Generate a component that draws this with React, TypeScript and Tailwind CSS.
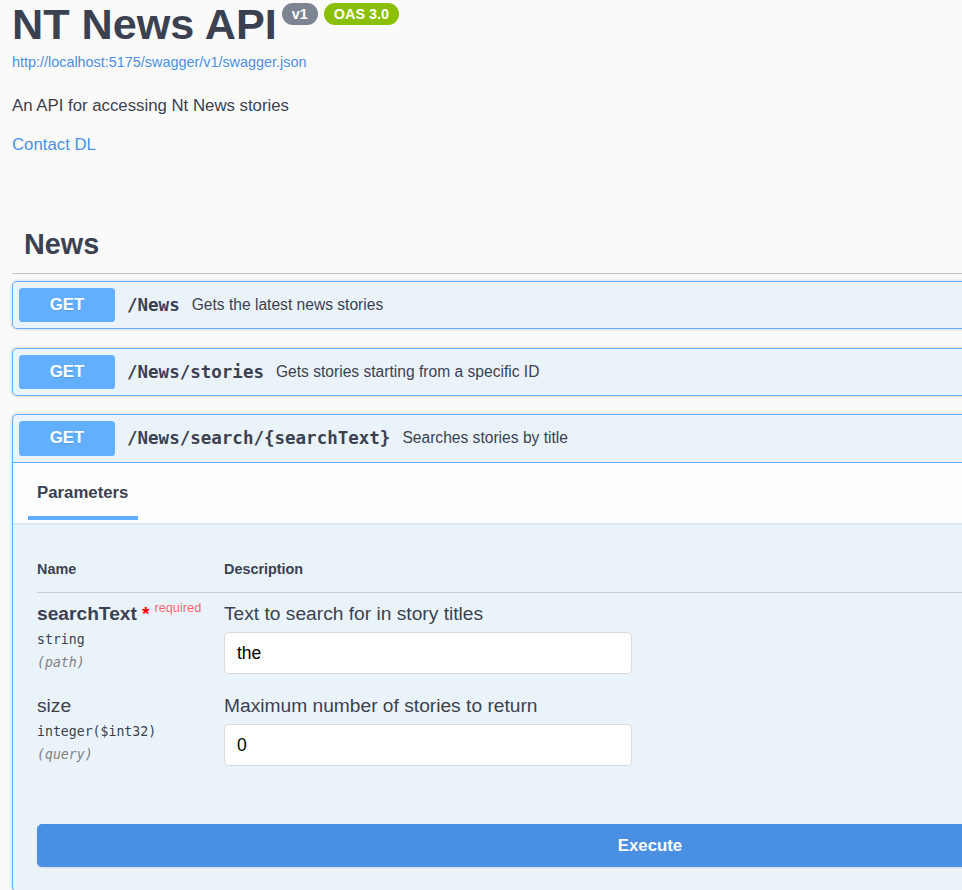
import React from "react";

const sans = "font-['Liberation_Sans',Arial,sans-serif]";
const mono = "font-['DejaVu_Sans_Mono',monospace]";

function Summary({ path, desc, open }: { path: string; desc: string; open?: boolean }) {
  return (
    <div
      className={`flex items-center p-[6px] ${open ? "border-b border-[#61affe]" : ""}`}
    >
      <div className="w-[96px] shrink-0 rounded-[3.6px] bg-[#61affe] py-[7.2px] text-center text-[16.8px] font-bold leading-[20px] text-white [text-shadow:0_1px_0_rgba(0,0,0,0.1)]">
        GET
      </div>
      <span className={`${mono} px-[12px] text-[17.5px] font-bold leading-[22px] text-[#3b4151]`}>
        {path}
      </span>
      <span className="text-[15.6px] leading-[18px] text-[#3b4151]">{desc}</span>
    </div>
  );
}

function ParamRow({
  name,
  required,
  type,
  where,
  desc,
  value,
}: {
  name: string;
  required?: boolean;
  type: string;
  where: string;
  desc: string;
  value: string;
}) {
  return (
    <div className="flex pt-[10px] pb-[11px]">
      <div className="w-[187px] shrink-0">
        <div className="flex h-[22px] items-start">
          <span className={`text-[19.2px] leading-[22px] text-[#3b4151] ${required ? "font-bold" : ""}`}>
            {name}
          </span>
          {required && (
            <>
              <span className="ml-[5px] text-[19.2px] font-bold leading-[22px] text-[#ff0000]">*</span>
              <span className="ml-[5px] mt-[-3px] text-[12.8px] leading-[16px] text-[rgba(255,0,0,0.6)]">
                required
              </span>
            </>
          )}
        </div>
        <div className={`${mono} mt-[6px] text-[13.2px] leading-[17px] text-[#3b4151]`}>{type}</div>
        <div className={`${mono} mt-[6px] text-[13.2px] italic leading-[17px] text-[#808080]`}>{where}</div>
      </div>
      <div className="flex flex-col">
        <div className="text-[19.2px] leading-[22px] text-[#3b4151]">{desc}</div>
        <div className="mt-[7px] flex h-[42px] w-[408px] items-center rounded-[4.8px] border border-[#d9d9d9] bg-white px-[12px] text-[17.5px] text-black">
          {value}
        </div>
      </div>
    </div>
  );
}

export default function App() {
  return (
    <div className={`${sans} h-[890px] w-[962px] overflow-hidden bg-[#fafafa] text-[#3b4151]`}>
      <div className="w-[1300px] px-[12px]">
        {/* Info */}
        <div className="flex items-start">
          <h2 className="text-[43.2px] font-bold leading-[48px] text-[#3b4151]">NT News API</h2>
          <span className="ml-[5px] mt-[3px] flex h-[22px] items-center rounded-full bg-[#7d8492] px-[10px] text-[14.4px] font-bold leading-[17px] text-white">
            v1
          </span>
          <span className="ml-[6px] mt-[3px] flex h-[22px] items-center rounded-full bg-[#89bf04] px-[10px] text-[14.4px] font-bold leading-[17px] text-white">
            OAS 3.0
          </span>
        </div>
        <div className="mt-[6px] text-[14.4px] leading-[17px] text-[#4990e2]">
          http://localhost:5175/swagger/v1/swagger.json
        </div>
        <p className="mt-[25px] text-[16.8px] leading-[19px] text-[#3b4151]">
          An API for accessing Nt News stories
        </p>
        <div className="mt-[20px] text-[16.8px] leading-[19px] text-[#4990e2]">Contact DL</div>

        {/* Tag */}
        <h3 className="mt-[61px] mb-[7px] border-b border-[rgba(59,65,81,0.3)] py-[12px] pl-[12px] text-[28.8px] font-bold leading-[34px] text-[#3b4151]">
          News
        </h3>

        <div className="mb-[18.4px] rounded-[4.8px] border border-[#61affe] bg-[#ebf3fa] shadow-[0_0_3.6px_rgba(0,0,0,0.19)]">
          <Summary path="/News" desc="Gets the latest news stories" />
        </div>
        <div className="mb-[18px] rounded-[4.8px] border border-[#61affe] bg-[#ebf3fa] shadow-[0_0_3.6px_rgba(0,0,0,0.19)]">
          <Summary path="/News/stories" desc="Gets stories starting from a specific ID" />
        </div>
        <div className="mb-[18.4px] rounded-[4.8px] border border-[#61affe] bg-[#ebf3fa] shadow-[0_0_3.6px_rgba(0,0,0,0.19)]">
          <Summary path="/News/search/{searchText}" desc="Searches stories by title" open />
          {/* Section header */}
          <div className="relative flex h-[60px] flex-col bg-[rgba(255,255,255,0.8)] pl-[24px] pt-[20px] shadow-[0_1px_2px_rgba(0,0,0,0.1)]">
            <h4 className="text-[16.8px] font-bold leading-[19px] text-[#3b4151]">Parameters</h4>
            <div className="ml-[-9px] mt-[14px] h-[4px] w-[110px] bg-[#61affe]" />
          </div>
          {/* Table */}
          <div className="px-[24px] pt-[24px] pb-[24px]">
            <div className="flex border-b border-[rgba(59,65,81,0.2)] py-[14.4px] text-[14.4px] font-bold leading-[17px] text-[#3b4151]">
              <div className="w-[187px] shrink-0">Name</div>
              <div>Description</div>
            </div>
            <ParamRow
              name="searchText"
              required
              type="string"
              where="(path)"
              desc="Text to search for in story titles"
              value="the"
            />
            <ParamRow
              name="size"
              type="integer($int32)"
              where="(query)"
              desc="Maximum number of stories to return"
              value="0"
            />
          </div>
          <div className="px-[24px] pt-[23px] pb-[24px]">
            <div className="w-full rounded-[4.8px] border border-[#4990e2] bg-[#4990e2] py-[9.6px] text-center text-[16.8px] font-bold leading-[22px] text-white shadow-[0_1px_2px_rgba(0,0,0,0.1)]">
              Execute
            </div>
          </div>
        </div>
      </div>
    </div>
  );
}
